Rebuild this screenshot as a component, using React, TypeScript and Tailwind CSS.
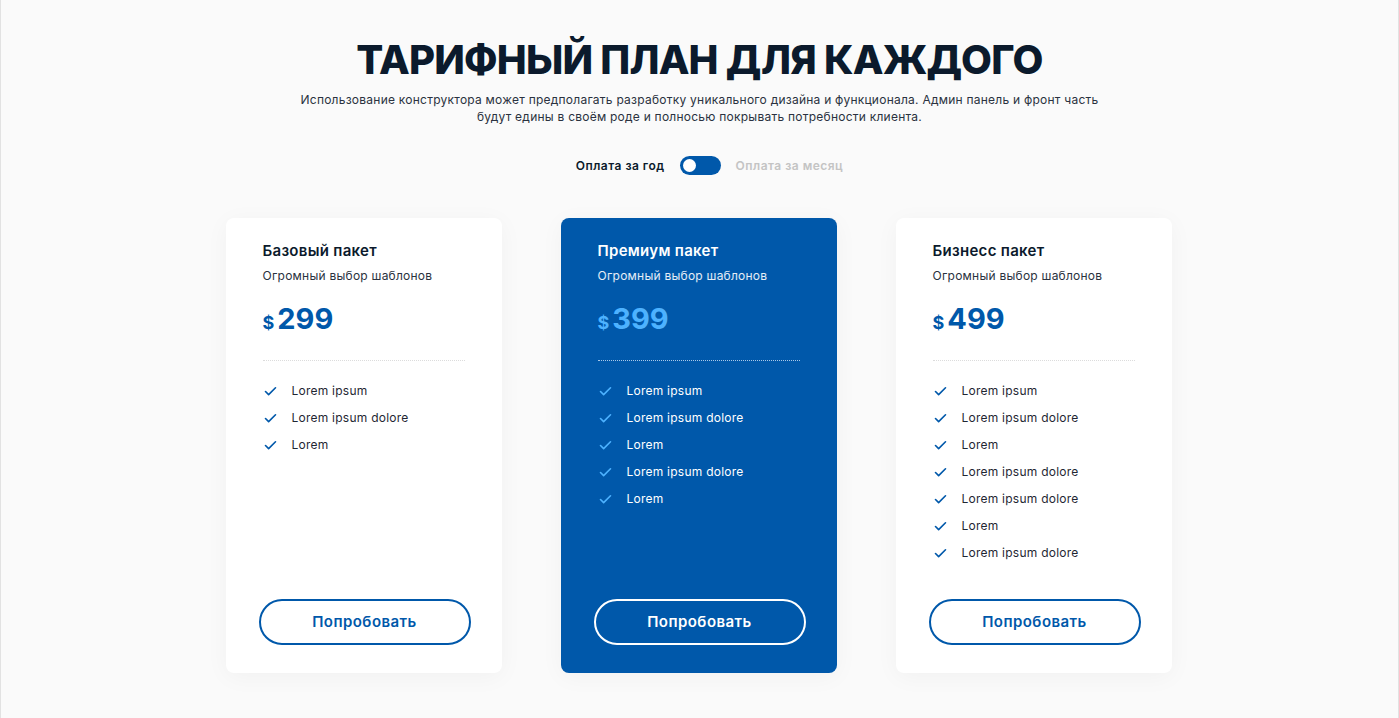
import { Check } from "lucide-react";

type Plan = {
  name: string;
  price: string;
  items: string[];
  featured?: boolean;
};

const plans: Plan[] = [
  { name: "Базовый пакет", price: "299", items: ["Lorem ipsum", "Lorem ipsum dolore", "Lorem"] },
  {
    name: "Премиум пакет",
    price: "399",
    featured: true,
    items: ["Lorem ipsum", "Lorem ipsum dolore", "Lorem", "Lorem ipsum dolore", "Lorem"],
  },
  {
    name: "Бизнесс пакет",
    price: "499",
    items: [
      "Lorem ipsum",
      "Lorem ipsum dolore",
      "Lorem",
      "Lorem ipsum dolore",
      "Lorem ipsum dolore",
      "Lorem",
      "Lorem ipsum dolore",
    ],
  },
];

function PlanCard({ plan }: { plan: Plan }) {
  const f = plan.featured;
  return (
    <div
      className={`flex h-[455px] w-[276px] flex-col rounded-lg px-[37px] pb-[28px] pt-[23px] shadow-[0_4px_24px_rgba(0,0,0,0.04)] ${
        f ? "bg-[#0058aa] text-white" : "bg-white text-[#0b1a2c]"
      }`}
    >
      <h3 className="text-[15px] font-semibold leading-5 tracking-[0.02em]">{plan.name}</h3>
      <p className={`mt-[5px] text-[12px] leading-5 tracking-[0.02em] ${f ? "text-white/90" : "text-[#2a3240]"}`}>
        Огромный выбор шаблонов
      </p>
      <div className={`mt-[15px] flex items-baseline gap-[3px] font-bold ${f ? "text-[#4db2ff]" : "text-[#0058aa]"}`}>
        <span className="text-[18px]">$</span>
        <span className="text-[29px] leading-9">{plan.price}</span>
      </div>
      <div className={`mt-[23px] border-t border-dotted ${f ? "border-[#a9c8e8]" : "border-[#dcdcdc]"}`} />
      <ul className="mt-[21px] flex flex-col gap-[9px]">
        {plan.items.map((it, i) => (
          <li key={i} className="flex h-[18px] items-center gap-[14px] text-[12px] tracking-[0.02em]">
            <Check className={`h-[15px] w-[15px] ${f ? "text-[#4db2ff]" : "text-[#0058aa]"}`} strokeWidth={2.6} />
            <span className={f ? "text-white" : "text-[#1f2733]"}>{it}</span>
          </li>
        ))}
      </ul>
      <button
        className={`-ml-[4px] mt-auto h-[46px] w-[212px] rounded-full border-2 text-[15px] font-semibold tracking-[0.03em] ${
          f ? "border-white text-white" : "border-[#0058aa] text-[#0058aa]"
        }`}
      >
        Попробовать
      </button>
    </div>
  );
}

export default function App() {
  return (
    <main
      className="min-h-[718px] w-full border-x border-[#e2e2e2] bg-[#fafafa] pb-[45px] pt-[34px]"
      style={{ fontFamily: "Inter, 'Noto Sans', sans-serif" }}
    >
      <h1 className="text-center text-[40px] font-extrabold leading-[52px] tracking-[-0.02em] text-[#0b1a2c]">
        ТАРИФНЫЙ ПЛАН ДЛЯ КАЖДОГО
      </h1>
      <p className="mx-auto mt-[5px] max-w-[812px] text-center text-[12px] leading-[17px] tracking-[0.02em] text-[#2a3240]">
        Использование конструктора может предполагать разработку уникального дизайна и функционала. Админ панель и фронт часть
        будут едины в своём роде и полносью покрывать потребности клиента.
      </p>
      <div className="mt-[31px] flex items-center justify-center gap-[15px] pl-[20px] text-[12px] font-semibold tracking-[0.04em]">
        <span className="text-[#0b1a2c]">Оплата за год</span>
        <div className="flex h-[19px] w-[41px] items-center rounded-full bg-[#0058aa] px-[3px]">
          <div className="h-[13px] w-[13px] rounded-full bg-white" />
        </div>
        <span className="text-[#c4c4c4]">Оплата за месяц</span>
      </div>
      <div className="mt-[43px] flex justify-center gap-[59px] pr-[2px]">
        {plans.map((p) => (
          <PlanCard key={p.name} plan={p} />
        ))}
      </div>
    </main>
  );
}
